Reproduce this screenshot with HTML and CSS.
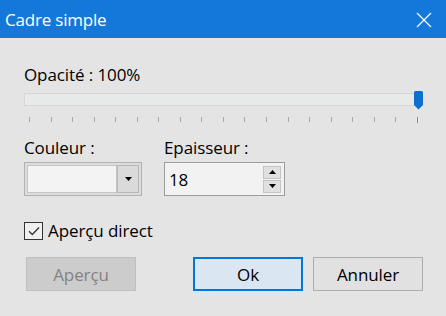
FILE: index.html
```
<!DOCTYPE html>
<html lang="fr">
<head>
<meta charset="utf-8">
<link rel="stylesheet" href="styles.css">
</head>
<body>
<div class="dialog">
  <div class="titlebar">
    <span class="title">Cadre simple</span>
    <svg class="close" width="16" height="16" viewBox="0 0 16 16"><path d="M1 1L15 15M15 1L1 15" stroke="#fff" stroke-width="1.2" fill="none"/></svg>
  </div>
  <div class="content">
    <div class="label opacity-label">Opacité : 100%</div>
    <div class="slider">
      <div class="track"></div>
      <svg class="thumb" width="11" height="19" viewBox="0 0 11 19"><path d="M1 1.5Q1 0 2.5 0H8.5Q10 0 10 1.5V14L5.5 18.5L1 14Z" fill="#0f6fd0"/></svg>
    </div>
    <div class="ticks">
      <i></i><i></i><i></i><i></i><i></i><i></i><i></i><i></i><i></i><i></i>
      <i></i><i></i><i></i><i></i><i></i><i></i><i></i><i></i><i></i>
    </div>
    <div class="fields">
      <div class="field">
        <div class="label">Couleur :</div>
        <div class="combo">
          <div class="combo-value"></div>
          <div class="combo-btn"><svg width="7" height="4" viewBox="0 0 7 4"><path d="M0 0H7L3.5 4Z" fill="#000"/></svg></div>
        </div>
      </div>
      <div class="field">
        <div class="label">Epaisseur :</div>
        <div class="spin">
          <div class="spin-value">18</div>
          <div class="spin-btns">
            <div class="spin-btn"><svg width="7" height="4" viewBox="0 0 7 4"><path d="M0 4H7L3.5 0Z" fill="#000"/></svg></div>
            <div class="spin-btn"><svg width="7" height="4" viewBox="0 0 7 4"><path d="M0 0H7L3.5 4Z" fill="#000"/></svg></div>
          </div>
        </div>
      </div>
    </div>
    <label class="check">
      <span class="box"><svg width="14" height="14" viewBox="0 0 14 14"><path d="M2 7.2L5.3 10.5L12 3.5" stroke="#333" stroke-width="1.3" fill="none"/></svg></span>
      <span class="label">Aperçu direct</span>
    </label>
    <div class="buttons">
      <div class="btn disabled">Aperçu</div>
      <div class="spacer"></div>
      <div class="btn primary">Ok</div>
      <div class="btn">Annuler</div>
    </div>
  </div>
</div>
</body>
</html>
```
FILE: styles.css
```
* { box-sizing: border-box; }
html, body { margin: 0; padding: 0; }
body {
  width: 446px;
  height: 316px;
  background: #e4e4e4;
  font-family: "Open Sans", "Noto Sans", sans-serif;
  color: #000;
  overflow: hidden;
}
.dialog { width: 446px; height: 316px; display: flex; flex-direction: column; }
.titlebar {
  height: 38px;
  background: #1478db;
  display: flex;
  align-items: center;
  justify-content: space-between;
  padding: 0 14px 0 5px;
}
.title { color: #fff; font-size: 17px; letter-spacing: -0.2px; }
.close { display: block; margin-top: 1px; }
.content { padding: 0 23px 0 24px; display: flex; flex-direction: column; }
.label { font-size: 17px; line-height: 22px; letter-spacing: -0.1px; }
.opacity-label { margin-top: 26px; }
.slider { position: relative; height: 13px; margin-top: 7px; margin-right: 2px; }
.track {
  height: 13px;
  background: #e8eaea;
  border: 1px solid #d5d7d7;
}
.thumb { position: absolute; right: -3px; top: -2px; }
.ticks {
  display: flex;
  justify-content: space-between;
  padding: 0 5px 0 5px;
  margin-top: 11px;
  height: 6px;
}
.ticks i { display: block; width: 1px; height: 5px; background: #a8a8a8; }
.ticks i:last-child { height: 6px; background: #909090; }
.fields { display: flex; gap: 22px; margin-top: 14px; }
.field { display: flex; flex-direction: column; gap: 3px; }
.combo {
  width: 118px;
  height: 34px;
  border: 1px solid #b2b2b2;
  padding: 2px;
  display: flex;
  background: #dcdcdc;
}
.combo-value { flex: 1; background: #f3f3f3; border: 1px solid #c6c6c6; }
.combo-btn {
  width: 22px;
  background: #dadada;
  border: 1px solid #b8b8b8;
  display: flex;
  align-items: center;
  justify-content: center;
}
.spin {
  width: 121px;
  height: 34px;
  border: 1px solid #9c9c9c;
  background: #f2f2f2;
  display: flex;
  align-items: center;
  padding: 0 3px 0 4px;
}
.spin-value { flex: 1; font-size: 17px; letter-spacing: -0.1px; }
.spin-btns { display: flex; flex-direction: column; gap: 1px; }
.spin-btn {
  width: 18px;
  height: 13px;
  background: #e0e0e0;
  border: 1px solid #c4c4c4;
  display: flex;
  align-items: center;
  justify-content: center;
}
.check { display: flex; align-items: center; gap: 5px; margin-top: 24px; }
.box {
  width: 19px;
  height: 18px;
  border: 1px solid #333;
  background: #f0f0f0;
  display: flex;
  align-items: center;
  justify-content: center;
}
.buttons { display: flex; margin-top: 15px; gap: 10px; }
.spacer { flex: 1; }
.btn {
  width: 110px;
  height: 34px;
  border: 1px solid #adadad;
  background: #e1e1e1;
  display: flex;
  align-items: center;
  justify-content: center;
  font-size: 17px;
  letter-spacing: -0.1px;
}
.btn.disabled { margin-left: 2px; background: #cccccc; border-color: #bfbfbf; color: #838383; }
.btn.primary { background: #dae6f1; border: 2px solid #0078d7; }
```
